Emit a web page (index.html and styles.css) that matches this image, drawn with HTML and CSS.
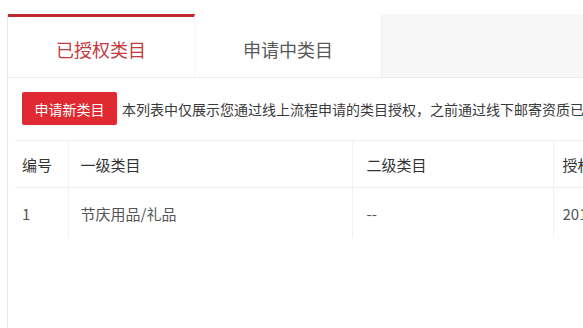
FILE: index.html
```html
<!DOCTYPE html>
<html lang="zh-CN">
<head>
<meta charset="utf-8">
<title>类目管理</title>
<link rel="stylesheet" href="styles.css">
</head>
<body>
<div class="page">
  <div class="tabs">
    <div class="tab active">已授权类目</div>
    <div class="tab">申请中类目</div>
  </div>
  <div class="toolbar">
    <button class="btn-apply">申请新类目</button>
    <span class="notice">本列表中仅展示您通过线上流程申请的类目授权，之前通过线下邮寄资质已授权的类目不在此列表中展示</span>
  </div>
  <table class="grid">
    <colgroup>
      <col class="c1"><col class="c2"><col class="c3"><col class="c4">
    </colgroup>
    <thead>
      <tr><th>编号</th><th>一级类目</th><th>二级类目</th><th>授权时间</th></tr>
    </thead>
    <tbody>
      <tr><td>1</td><td>节庆用品/礼品</td><td>--</td><td>2017-06-01</td></tr>
    </tbody>
  </table>
</div>
</body>
</html>
```

FILE: styles.css
```css
html, body {
  margin: 0;
  padding: 0;
  background: #fff;
  overflow: hidden;
}
body {
  font-family: "Noto Sans CJK SC", "Noto Sans", "Liberation Sans", sans-serif;
  color: #333;
  width: 583px;
  height: 328px;
}
.page {
  margin: 14px 0 0 7px;
  border-left: 1px solid #e6e6e6;
  height: 314px;
  width: 700px;
}
.tabs {
  display: flex;
  height: 63px;
  background: #f7f7f7;
  border-bottom: 1px solid #ececec;
}
.tab {
  box-sizing: border-box;
  width: 187px;
  background: #fff;
  border-top: 3px solid #fff;
  border-right: 1px solid #eeeeee;
  font-size: 18px;
  color: #5a5a5a;
  display: flex;
  align-items: center;
  justify-content: center;
  padding-top: 3px;
}
.tab.active {
  border-top-color: #c0282f;
  color: #c23a40;
  border-right-color: #f6f6f6;
}
.toolbar {
  display: flex;
  align-items: center;
  gap: 5px;
  padding: 14px 0 15px 14px;
  white-space: nowrap;
}
.btn-apply {
  box-sizing: border-box;
  height: 33px;
  width: 95px;
  border: none;
  border-radius: 2px;
  background: #df2a31;
  color: #fff;
  font-family: inherit;
  font-size: 14px;
  padding: 0;
  flex: none;
}
.notice {
  font-size: 14px;
  color: #3a3a3a;
}
.grid {
  margin-left: 7px;
  border-collapse: collapse;
  table-layout: fixed;
  width: 700px;
  border-top: 1px solid #ededed;
}
.c1 { width: 53px; }
.c2 { width: 284px; }
.c3 { width: 201px; }
.c4 { width: 162px; }
.grid th, .grid td {
  text-align: left;
  white-space: nowrap;
  overflow: hidden;
  font-size: 15px;
  border-left: 1px solid #f2f2f2;
}
.grid th:first-child, .grid td:first-child {
  border-left: none;
  padding-left: 7px;
}
.grid th:nth-child(2), .grid td:nth-child(2) { padding-left: 12px; }
.grid th:nth-child(3), .grid td:nth-child(3) { padding-left: 14px; }
.grid th:nth-child(4), .grid td:nth-child(4) { padding-left: 9px; }
.grid th {
  height: 44px;
  font-weight: 400;
  color: #333;
  border-bottom: 1px solid #eeeeee;
}
.grid td {
  height: 48px;
  color: #555;
}
```
